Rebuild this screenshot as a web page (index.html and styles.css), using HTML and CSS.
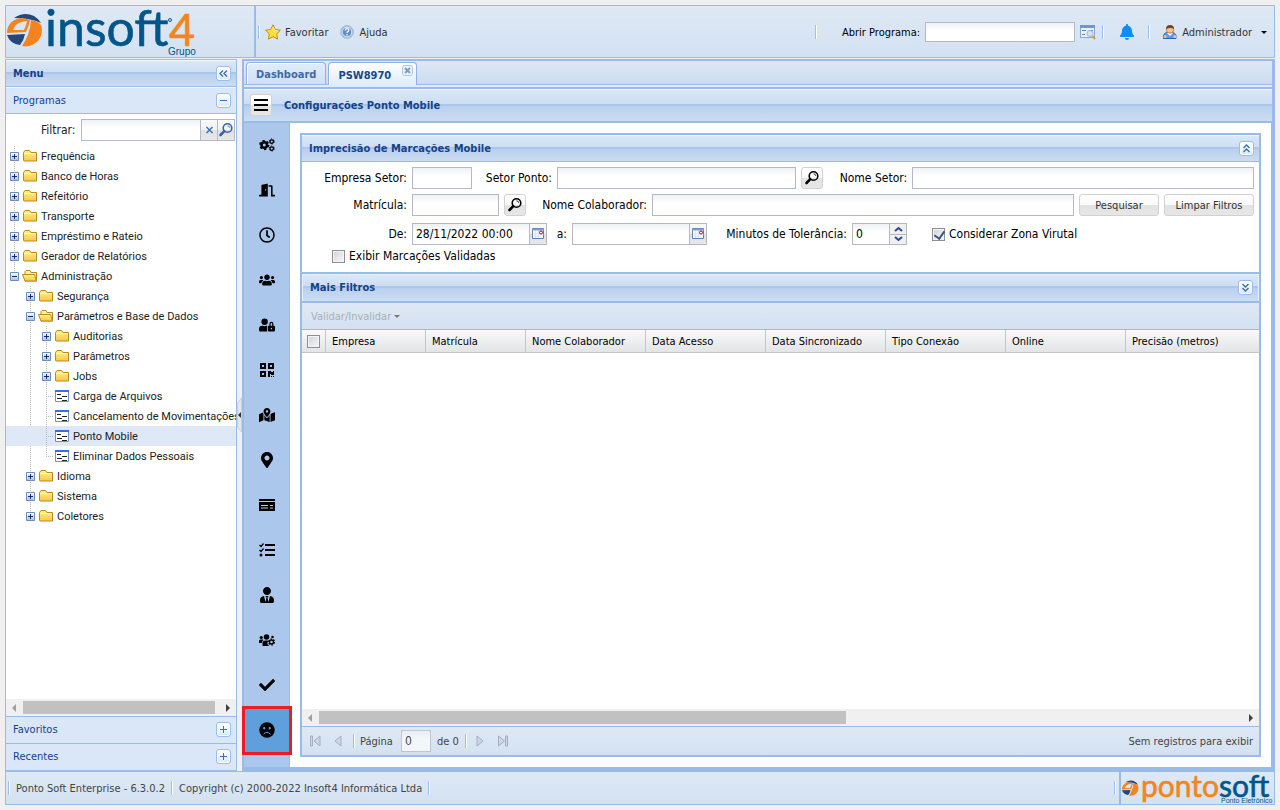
FILE: index.html
```
<!DOCTYPE html>
<html lang="pt-BR">
<head>
    <meta charset="UTF-8">
    <meta name="viewport" content="width=device-width, initial-scale=1.0">
    <title>Ponto Soft Enterprise</title>
    <link rel="stylesheet" href="styles.css">
</head>
<body>

<!-- icones -->
<svg class="sprite" aria-hidden="true">
    <symbol id="mais" viewBox="0 0 9 9"><path d="M.5.500h8v8h-8z" fill="url(#azulado)" stroke="#6f8db3"/><path d="M2 4.500h5M4.500 2v5" stroke="#0f2f66"/></symbol>
    <symbol id="menos" viewBox="0 0 9 9"><path d="M.5.500h8v8h-8z" fill="url(#azulado)" stroke="#6f8db3"/><path d="M2 4.500h5" stroke="#0f2f66"/></symbol>
    <symbol id="pasta" viewBox="0 0 16 16"><path d="M1.500 12.500V4.500L3 2.500h4.500l1.500 2h5.500v8.500H2z" fill="url(#ouro)" stroke="#b98a20"/><path d="M2.500 5.500h11" stroke="#fffbd0"/></symbol>
    <symbol id="aberta" viewBox="0 0 16 16"><path d="M3 12V3.500L4 2.500h4l1 2h5.500v8.500H3z" fill="#fff3a6" stroke="#b98a20"/><path d="M.5 6.500h12l2 6.500H3z" fill="url(#ouro)" stroke="#b98a20"/></symbol>
    <symbol id="folha" viewBox="0 0 16 16"><path d="M1.500 2.500h13v11h-13z" fill="#fff" stroke="#6f8fd0"/><path d="M1 3h14" stroke="#3d6be0" stroke-width="2"/><path d="M3 6.500h4M8 8.500h5M3 10.500h5M8 12.500h5" stroke="#222"/></symbol>
    <symbol id="lupa" viewBox="0 0 16 16"><circle cx="9.500" cy="6" r="4.300" fill="none" stroke="currentColor" stroke-width="1.600"/><path d="M6.300 9.200L2.500 13" stroke="currentColor" stroke-width="2.600" stroke-linecap="round"/><path d="M9.500 3.800q2 0 2.200 2" fill="none" stroke="currentColor" stroke-width=".8"/></symbol>
    <symbol id="calendario" viewBox="0 0 14 14"><path d="M1.500 1.500h11v10h-11z" fill="#fff" stroke="#5f82b5"/><path d="M1 2.500h12" stroke="#7c9bc8" stroke-width="2"/><path d="M3 6.500h7M3 9h7M4.500 4v7M7.500 4v7" stroke="#dde4ee"/><circle cx="10" cy="5.500" r="1.500" fill="#fff" stroke="#a00020"/></symbol>
    <symbol id="dupla" viewBox="0 0 9 9"><path d="M1.500 4l3-3 3 3M1.500 8l3-3 3 3" fill="none" stroke="#3a70ab" stroke-width="1.400"/></symbol>
    <symbol id="marca" viewBox="0 0 36 34">
        <path d="M7 5Q17-2 27 3Q32 6 34 10Q23 5 7 5z" fill="#25477b"/>
        <path fill-rule="evenodd" d="M13 5C4 7 0 13 0 20L19 19Q22 13 23 7Q18 5 13 5zM6 17Q8 9 20 8Q19 13 17 17z" fill="#f5841f"/>
        <path d="M24 7Q31 8 34 12Q37 20 31 28Q24 35 15 33Q23 22 24 7z" fill="#f5841f"/>
        <path d="M0 22L18 21Q17 27 13 32Q3 31 0 22z" fill="#25477b"/>
    </symbol>
    <defs>
        <linearGradient id="ouro" x2="0" y2="1"><stop stop-color="#fff48f"/><stop offset="1" stop-color="#fbc64a"/></linearGradient>
        <linearGradient id="azulado" x2="0" y2="1"><stop stop-color="#fff"/><stop offset="1" stop-color="#a9c0de"/></linearGradient>
    </defs>
</svg>

<header class="topo">
    <div class="logo">
        <svg viewBox="0 0 200 51" width="200" height="51" role="img" aria-label="Insoft4 Grupo">
            <use href="#marca" x="1" y="7" width="36" height="34"/>
            <text class="logo-azul" x="39" y="40" font-size="50">insoft</text>
            <text class="logo-laranja" x="163" y="40" font-size="45">4</text>
            <circle cx="164" cy="14" r="1.500" fill="none" stroke="#00568a"/>
            <text class="logo-sub" x="162" y="49" font-size="10">Grupo</text>
        </svg>
    </div>
    <div class="barra-topo">
        <span class="sep"></span>
        <button class="link-btn" type="button">
            <svg width="16" height="16" viewBox="0 0 16 16"><path d="M8 .8l2.300 4.700 5.100.8-3.700 3.600.9 5.200L8 12.600l-4.600 2.500.9-5.200L.6 6.300l5.100-.8z" fill="#ffdf3a" stroke="#c98a12"/><path d="M8 3l1.500 3.300 3 .6" fill="none" stroke="#fff8b0"/></svg>
            Favoritar
        </button>
        <button class="link-btn ajuda" type="button">
            <svg width="16" height="16" viewBox="0 0 16 16"><circle cx="8" cy="8" r="6.500" fill="#9dbbe2" stroke="#a9bfdc"/><circle cx="8" cy="8" r="4.800" fill="#5f8ccb" stroke="#dce9f8"/><path d="M6.300 6.500q0-1.800 1.800-1.800t1.700 1.500q0 .8-1.700 2v.8M8 10v1.500" fill="none" stroke="#fff" stroke-width="1.300"/></svg>
            Ajuda
        </button>
        <span class="sep longe"></span>
        <label class="abrir-label" for="abrir">Abrir Programa:</label>
        <input class="campo abrir" id="abrir" type="text">
        <button class="icone-btn" type="button" aria-label="Buscar programa">
            <svg width="16" height="16" viewBox="0 0 16 16"><path d="M.5 1.500h14v12H.5z" fill="#eaf1fa" stroke="#87a8d6"/><path d="M0 2.500h15" stroke="#6b98d8" stroke-width="3"/><path d="M2 6.500h4M2 10.500h3M9 6.500h4" stroke="#5d84bd"/><circle cx="10" cy="9.500" r="3" fill="#cfe2f8" stroke="#9db7d8"/><path d="M12.500 12l2.500 3" stroke="#d09a55" stroke-width="2"/></svg>
        </button>
        <span class="sep sep-sino"></span>
        <button class="icone-btn sino" type="button" aria-label="Notificações">
            <svg width="14" height="16" viewBox="0 0 448 512" fill="#0b8efb"><path d="M224 512c35.320 0 63.970-28.650 63.970-64H160.030c0 35.350 28.650 64 63.970 64zm215.390-149.710c-19.320-20.760-55.470-51.990-55.470-154.290 0-77.700-54.480-139.900-127.940-155.160V32c0-17.670-14.320-32-31.980-32s-31.980 14.330-31.980 32v20.840C118.560 68.100 64.080 130.300 64.080 208c0 102.300-36.150 133.530-55.470 154.290-6 6.450-8.660 14.160-8.610 21.710.11 16.400 12.980 32 32.100 32h383.800c19.120 0 32-15.600 32.100-32 .05-7.550-2.610-15.270-8.610-21.710z"/></svg>
        </button>
        <span class="sep"></span>
        <button class="link-btn usuario" type="button">
            <svg width="16" height="16" viewBox="0 0 16 16"><path d="M1.500 14.500q-1-5.500 4-6h4.500q5 .5 4 6z" fill="#5b9cf0" stroke="#2d62b5"/><path d="M5 9l3 3 3-3z" fill="#fff"/><circle cx="8" cy="5.500" r="3.700" fill="#f6c48e" stroke="#b07030" stroke-width=".8"/><path d="M4 5Q4 1 8 1t4 4Q9 2.800 4 5z" fill="#7a431b"/><circle cx="3" cy="12.500" r="1.500" fill="#f6c48e"/><circle cx="13" cy="12.500" r="1.500" fill="#f6c48e"/></svg>
            Administrador
            <span class="seta"></span>
        </button>
    </div>
</header>

<div class="corpo">
    <aside class="lateral">
        <div class="cabecalho menu-cab">
            <h2>Menu</h2>
            <button class="ferramenta" type="button" aria-label="Recolher menu"><svg class="gira-esq" width="9" height="9"><use href="#dupla"/></svg></button>
        </div>
        <div class="sanfona">
            <h3>Programas</h3>
            <button class="ferramenta" type="button" aria-label="Recolher programas"><svg width="9" height="9"><path d="M1 4.500h7" stroke="#3a70ab"/></svg></button>
        </div>
        <div class="filtro">
            <label for="filtrar">Filtrar:</label>
            <input class="campo" id="filtrar" type="text">
            <button class="gatilho" type="button" aria-label="Limpar"><svg width="9" height="9"><path d="M1.500 1l6 6M7.500 1l-6 6" stroke="#3b76b8" stroke-width="1.500"/></svg></button>
            <button class="gatilho" type="button" aria-label="Filtrar"><svg width="16" height="16"><use href="#lupa"/></svg></button>
        </div>
        <nav class="arvore">
            <ul>
                <li><div class="no"><svg class="exp"><use href="#mais"/></svg><svg class="ic"><use href="#pasta"/></svg>Frequência</div></li>
                <li><div class="no"><svg class="exp"><use href="#mais"/></svg><svg class="ic"><use href="#pasta"/></svg>Banco de Horas</div></li>
                <li><div class="no"><svg class="exp"><use href="#mais"/></svg><svg class="ic"><use href="#pasta"/></svg>Refeitório</div></li>
                <li><div class="no"><svg class="exp"><use href="#mais"/></svg><svg class="ic"><use href="#pasta"/></svg>Transporte</div></li>
                <li><div class="no"><svg class="exp"><use href="#mais"/></svg><svg class="ic"><use href="#pasta"/></svg>Empréstimo e Rateio</div></li>
                <li><div class="no"><svg class="exp"><use href="#mais"/></svg><svg class="ic"><use href="#pasta"/></svg>Gerador de Relatórios</div></li>
                <li><div class="no"><svg class="exp"><use href="#menos"/></svg><svg class="ic"><use href="#aberta"/></svg>Administração</div>
                    <ul class="nivel-1">
                        <li><div class="no"><svg class="exp"><use href="#mais"/></svg><svg class="ic"><use href="#pasta"/></svg>Segurança</div></li>
                        <li><div class="no"><svg class="exp"><use href="#menos"/></svg><svg class="ic"><use href="#aberta"/></svg>Parâmetros e Base de Dados</div>
                            <ul class="nivel-2">
                                <li><div class="no"><svg class="exp"><use href="#mais"/></svg><svg class="ic"><use href="#pasta"/></svg>Auditorias</div></li>
                                <li><div class="no"><svg class="exp"><use href="#mais"/></svg><svg class="ic"><use href="#pasta"/></svg>Parâmetros</div></li>
                                <li><div class="no"><svg class="exp"><use href="#mais"/></svg><svg class="ic"><use href="#pasta"/></svg>Jobs</div></li>
                                <li><div class="no"><span class="galho"></span><svg class="ic"><use href="#folha"/></svg>Carga de Arquivos</div></li>
                                <li><div class="no"><span class="galho"></span><svg class="ic"><use href="#folha"/></svg>Cancelamento de Movimentações</div></li>
                                <li><div class="no selecionado"><span class="galho"></span><svg class="ic"><use href="#folha"/></svg>Ponto Mobile</div></li>
                                <li><div class="no"><span class="galho"></span><svg class="ic"><use href="#folha"/></svg>Eliminar Dados Pessoais</div></li>
                            </ul>
                        </li>
                        <li><div class="no"><svg class="exp"><use href="#mais"/></svg><svg class="ic"><use href="#pasta"/></svg>Idioma</div></li>
                        <li><div class="no"><svg class="exp"><use href="#mais"/></svg><svg class="ic"><use href="#pasta"/></svg>Sistema</div></li>
                        <li><div class="no"><svg class="exp"><use href="#mais"/></svg><svg class="ic"><use href="#pasta"/></svg>Coletores</div></li>
                    </ul>
                </li>
            </ul>
        </nav>
        <div class="rolagem">
            <span class="rol-esq"></span><span class="trilho"><span class="polegar arvore-polegar"></span></span><span class="rol-dir"></span>
        </div>
        <div class="sanfona fechada">
            <h3>Favoritos</h3>
            <button class="ferramenta" type="button" aria-label="Expandir favoritos"><svg width="9" height="9"><path d="M1 4.500h7M4.500 1v7" stroke="#3a70ab"/></svg></button>
        </div>
        <div class="sanfona fechada">
            <h3>Recentes</h3>
            <button class="ferramenta" type="button" aria-label="Expandir recentes"><svg width="9" height="9"><path d="M1 4.500h7M4.500 1v7" stroke="#3a70ab"/></svg></button>
        </div>
    </aside>

    <div class="divisor"><button type="button" aria-label="Recolher"><svg width="5" height="34"><path d="M4.500 0v34L.5 29V5z" fill="#e6e6e6" stroke="#cfcfcf"/><path d="M4 14v6l-3-3z" fill="#333"/></svg></button></div>

    <main class="painel">
        <div class="abas">
            <a class="aba" href="#">Dashboard</a>
            <a class="aba ativa" href="#">PSW8970<svg class="fechar" width="11" height="11"><rect x=".5" y=".5" width="10" height="10" rx="2" fill="#eaf3fe" stroke="#a9c6ea"/><path d="M3 3l5 5M8 3L3 8" stroke="#7d9cc5" stroke-width="2"/></svg></a>
        </div>
        <div class="fio"></div>
        <div class="cabecalho titulo-cab">
            <button class="botao hamburguer" type="button" aria-label="Abrir menu"><svg width="14" height="14"><path d="M0 2h14M0 7h14M0 12h14" stroke="#000" stroke-width="2"/></svg></button>
            <h1>Configurações Ponto Mobile</h1>
        </div>
        <div class="conteudo">
            <nav class="icones">
                <a href="#" aria-label="Parâmetros"><svg viewBox="0 0 32 26"><circle cx="10.500" cy="13" r="5.500" fill="none" stroke="#000" stroke-width="5"/><circle cx="10.500" cy="13" r="8.500" fill="none" stroke="#000" stroke-width="3.500" stroke-dasharray="4.450"/><circle cx="25.500" cy="6" r="3.500" fill="none" stroke="#000" stroke-width="2.500"/><circle cx="25.500" cy="6" r="5" fill="none" stroke="#000" stroke-width="2" stroke-dasharray="2.618"/><circle cx="25.500" cy="20" r="3.500" fill="none" stroke="#000" stroke-width="2.500"/><circle cx="25.500" cy="20" r="5" fill="none" stroke="#000" stroke-width="2" stroke-dasharray="2.618"/></svg></a>
                <a href="#" aria-label="Acessos"><svg viewBox="0 0 640 512"><path fill-rule="evenodd" d="M624 448h-80V113.500C544 86.200 522.500 64 496 64H384v64h96v384h144c8.800 0 16-7.200 16-16v-32c0-8.800-7.200-16-16-16zM312.200 1l-192 49.700C106 54.400 96 67.600 96 82.600V448H16c-8.800 0-16 7.200-16 16v32c0 8.800 7.200 16 16 16h336V33.200C352 11.600 332.400-4.200 312.200 1zM264 288c-13.300 0-24-14.300-24-32s10.700-32 24-32 24 14.300 24 32-10.700 32-24 32z"/></svg></a>
                <a href="#" aria-label="Horários"><svg viewBox="0 0 512 512"><path d="M256 8C119 8 8 119 8 256s111 248 248 248 248-111 248-248S393 8 256 8zm0 448c-110.500 0-200-89.500-200-200S145.500 56 256 56s200 89.500 200 200-89.500 200-200 200zm61.800-104.400l-84.900-61.700c-3.100-2.300-4.900-5.900-4.900-9.700V116c0-6.600 5.400-12 12-12h32c6.600 0 12 5.400 12 12v141.700l66.800 48.600c5.400 3.900 6.500 11.400 2.600 16.800L334.600 349c-3.900 5.300-11.400 6.500-16.800 2.600z"/></svg></a>
                <a href="#" aria-label="Grupos"><svg viewBox="0 0 640 512"><path d="M96 224c35.300 0 64-28.700 64-64s-28.700-64-64-64-64 28.700-64 64 28.700 64 64 64zm448 0c35.300 0 64-28.700 64-64s-28.700-64-64-64-64 28.700-64 64 28.700 64 64 64zm32 32h-64c-17.600 0-33.500 7.100-45.100 18.600 40.300 22.100 68.900 62 75.100 109.400h66c17.700 0 32-14.300 32-32v-32c0-35.300-28.700-64-64-64zm-256 0c61.900 0 112-50.100 112-112S381.900 32 320 32 208 82.100 208 144s50.100 112 112 112zm76.800 32h-8.300c-20.800 10-43.900 16-68.500 16s-47.600-6-68.500-16h-8.300C179.600 288 128 339.600 128 403.200V432c0 26.500 21.500 48 48 48h288c26.500 0 48-21.500 48-48v-28.800c0-63.600-51.600-115.200-115.200-115.200zm-223.700-13.400C161.500 263.100 145.600 256 128 256H64c-35.300 0-64 28.700-64 64v32c0 17.700 14.300 32 32 32h65.900c6.300-47.400 34.900-87.300 75.200-109.400z"/></svg></a>
                <a href="#" aria-label="Permissões"><svg viewBox="0 0 640 512"><path d="M224 256A128 128 0 1 0 96 128a128 128 0 0 0 128 128zm96 64a63.080 63.080 0 0 1 8.100-30.500c-4.800-.5-9.500-1.500-14.500-1.500h-16.700a174.080 174.080 0 0 1-145.800 0h-16.700A134.430 134.430 0 0 0 0 422.400V464a48 48 0 0 0 48 48h280.900a63.540 63.540 0 0 1-8.900-32zm288-32h-32v-80a80 80 0 0 0-160 0v80h-32a32 32 0 0 0-32 32v160a32 32 0 0 0 32 32h224a32 32 0 0 0 32-32V320a32 32 0 0 0-32-32zM496 432a32 32 0 1 1 32-32 32 32 0 0 1-32 32zm32-144h-64v-80a32 32 0 0 1 64 0z"/></svg></a>
                <a href="#" aria-label="QR Code"><svg viewBox="0 0 448 512"><path d="M0 224h192V32H0v192zM64 96h64v64H64V96zm192-64v192h192V32H256zm128 128h-64V96h64v64zM0 480h192V288H0v192zm64-128h64v64H64v-64zm352-64h32v128h-96v-32h-32v96h-64V288h96v32h64v-32zm0 160h32v32h-32v-32zm-64 0h32v32h-32v-32z"/></svg></a>
                <a href="#" aria-label="Mapa"><svg viewBox="0 0 576 512"><path d="M288 0c-69.590 0-126 56.410-126 126 0 56.260 82.350 158.800 113.900 196.020 6.390 7.540 17.820 7.540 24.200 0C331.650 284.800 414 182.260 414 126 414 56.410 357.590 0 288 0zm0 168c-23.200 0-42-18.800-42-42s18.800-42 42-42 42 18.800 42 42-18.800 42-42 42zM20.120 215.950A32.006 32.006 0 0 0 0 245.660v250.320c0 11.320 11.430 19.060 21.940 14.860L160 448V214.920c-8.840-15.980-16.070-31.540-21.250-46.420L20.120 215.950zM288 359.670c-14.070 0-27.380-6.180-36.510-16.960-19.660-23.200-40.570-49.620-59.490-76.720v182l192 64V266c-18.920 27.090-39.820 53.520-59.490 76.720-9.130 10.770-22.440 16.950-36.510 16.950zm266.060-198.510L416 224v288l139.880-55.950A31.996 31.996 0 0 0 576 426.340V176.020c0-11.320-11.430-19.060-21.940-14.860z"/></svg></a>
                <a href="#" aria-label="Locais"><svg viewBox="0 0 384 512"><path d="M172.268 501.670C26.970 291.031 0 269.413 0 192 0 85.961 85.961 0 192 0s192 85.961 192 192c0 77.413-26.970 99.031-172.268 309.670-9.535 13.774-29.930 13.773-39.464 0zM192 272c44.183 0 80-35.817 80-80s-35.817-80-80-80-80 35.817-80 80 35.817 80 80 80z"/></svg></a>
                <a href="#" aria-label="Cartões"><svg viewBox="0 0 32 24"><path fill-rule="evenodd" d="M1 0h30q1 0 1 1v3H0V1q0-1 1-1zM0 6h32v17q0 1-1 1H1q-1 0-1-1zM4 12v2h14v-2zM4 17v2h14v-2zM22 12v2h6v-2zM22 17v2h6v-2z"/></svg></a>
                <a href="#" aria-label="Tarefas"><svg viewBox="0 0 32 28"><path d="M12 2h20v4H12zM12 12h20v4H12zM12 22h20v4H12z"/><path d="M1 4l3 3 5-6M1 14l3 3 5-6" fill="none" stroke="#000" stroke-width="2.500"/><circle cx="4" cy="24" r="3"/></svg></a>
                <a href="#" aria-label="Gestores"><svg viewBox="0 0 448 512"><path d="M224 256c70.700 0 128-57.300 128-128S294.700 0 224 0 96 57.300 96 128s57.300 128 128 128zm95.800 32.600L272 480l-32-136 32-56h-96l32 56-32 136-47.800-191.400C56.900 292 0 350.300 0 422.400V464c0 26.500 21.500 48 48 48h352c26.500 0 48-21.500 48-48v-41.600c0-72.100-56.900-130.400-128.200-133.800z"/></svg></a>
                <a href="#" aria-label="Configurar equipes"><svg viewBox="0 0 32 26"><circle cx="4.500" cy="8" r="3.200"/><circle cx="15" cy="7" r="5.500"/><path d="M0 18v-3q0-3 3-3h4q2 0 2 1-3 2-3.500 6H1q-1 0-1-1zM7 24v-5q0-5 6-5h4q2 0 1 2-2 2-1 5l3 4H8q-1 0-1-1z"/><circle cx="25" cy="17" r="4" fill="none" stroke="#000" stroke-width="2.800"/><circle cx="25" cy="17" r="6" fill="none" stroke="#000" stroke-width="2.500" stroke-dasharray="3.140"/><circle cx="27" cy="7" r="2.500"/></svg></a>
                <a href="#" aria-label="Validar"><svg viewBox="0 0 512 512"><path d="M173.898 439.404l-166.400-166.400c-9.997-9.997-9.997-26.206 0-36.204l36.203-36.204c9.997-9.998 26.207-9.998 36.204 0L192 312.690 432.095 72.596c9.997-9.997 26.207-9.997 36.204 0l36.203 36.204c9.997 9.997 9.997 26.206 0 36.204l-294.400 294.401c-9.998 9.997-26.207 9.997-36.204-.001z"/></svg></a>
                <a class="atual" href="#" aria-label="Imprecisão de marcações"><svg viewBox="0 0 32 32"><circle cx="16" cy="16" r="15.500"/><circle cx="10.500" cy="12.500" r="2.300" fill="#5fa0dc"/><circle cx="21.500" cy="12.500" r="2.300" fill="#5fa0dc"/><path d="M9.500 24q6.500-7 13 0" fill="none" stroke="#5fa0dc" stroke-width="2" stroke-linecap="round"/></svg></a>
            </nav>

            <section class="quadro">
                <div class="cabecalho">
                    <h2>Imprecisão de Marcações Mobile</h2>
                    <button class="ferramenta" type="button" aria-label="Recolher"><svg width="9" height="9"><use href="#dupla"/></svg></button>
                </div>
                <form class="formulario">
                    <div class="linha">
                        <label class="rot-1" for="empresa">Empresa Setor:</label>
                        <input class="campo c-empresa" id="empresa" type="text">
                        <label class="rot-setor" for="setor">Setor Ponto:</label>
                        <input class="campo c-setor" id="setor" type="text">
                        <button class="botao quadrado" type="button" aria-label="Buscar setor"><svg width="16" height="16"><use href="#lupa"/></svg></button>
                        <label class="rot-nome" for="nomeSetor">Nome Setor:</label>
                        <input class="campo c-nome-setor" id="nomeSetor" type="text">
                    </div>
                    <div class="linha">
                        <label class="rot-1" for="matricula">Matrícula:</label>
                        <input class="campo c-matricula" id="matricula" type="text">
                        <button class="botao quadrado" type="button" aria-label="Buscar colaborador"><svg width="16" height="16"><use href="#lupa"/></svg></button>
                        <label class="rot-colab" for="colaborador">Nome Colaborador:</label>
                        <input class="campo c-flex" id="colaborador" type="text">
                        <button class="botao b-pesquisar" type="button">Pesquisar</button>
                        <button class="botao b-limpar" type="button">Limpar Filtros</button>
                    </div>
                    <div class="linha linha-data">
                        <label class="rot-1" for="de">De:</label>
                        <span class="data"><input class="campo" id="de" type="text" value="28/11/2022 00:00"><button class="gatilho" type="button" aria-label="Calendário"><svg width="14" height="14"><use href="#calendario"/></svg></button></span>
                        <label class="rot-a" for="ate">a:</label>
                        <span class="data"><input class="campo" id="ate" type="text"><button class="gatilho" type="button" aria-label="Calendário"><svg width="14" height="14"><use href="#calendario"/></svg></button></span>
                        <label class="rot-min" for="minutos">Minutos de Tolerância:</label>
                        <span class="giro"><input class="campo" id="minutos" type="text" value="0"><span class="giro-botoes"><button type="button" aria-label="Aumentar"><svg width="9" height="6"><path d="M1 5l3.500-3L8 5" fill="none" stroke="#2c4a8e" stroke-width="2"/></svg></button><button type="button" aria-label="Diminuir"><svg width="9" height="6"><path d="M1 1l3.500 3L8 1" fill="none" stroke="#2c4a8e" stroke-width="2"/></svg></button></span></span>
                        <label class="opcao zona"><input type="checkbox" checked>Considerar Zona Virutal</label>
                    </div>
                    <div class="linha linha-exibir">
                        <label class="opcao"><input type="checkbox">Exibir Marcações Validadas</label>
                    </div>
                </form>
                <div class="cabecalho mais-filtros">
                    <h2>Mais Filtros</h2>
                    <button class="ferramenta" type="button" aria-label="Expandir"><svg class="gira-baixo" width="9" height="9"><use href="#dupla"/></svg></button>
                </div>
                <div class="barra-grade">
                    <button type="button" disabled>Validar/Invalidar<span class="seta"></span></button>
                </div>
                <div class="grade">
                    <table>
                        <thead>
                            <tr>
                                <th class="col-check"><input type="checkbox" aria-label="Selecionar todos"></th>
                                <th class="col-m">Empresa</th>
                                <th class="col-m">Matrícula</th>
                                <th class="col-g">Nome Colaborador</th>
                                <th class="col-g">Data Acesso</th>
                                <th class="col-g">Data Sincronizado</th>
                                <th class="col-g">Tipo Conexão</th>
                                <th class="col-g">Online</th>
                                <th>Precisão (metros)</th>
                            </tr>
                        </thead>
                        <tbody></tbody>
                    </table>
                </div>
                <div class="rolagem">
                    <span class="rol-esq"></span><span class="trilho"><span class="polegar grade-polegar"></span></span><span class="rol-dir"></span>
                </div>
                <div class="paginacao">
                    <button type="button" disabled aria-label="Primeira"><svg width="12" height="12"><path d="M1.500 1h2v10h-2zM11 1v10L5 6z" fill="#cdd6e2" stroke="#a3afbf"/></svg></button>
                    <button type="button" disabled aria-label="Anterior"><svg width="12" height="12"><path d="M10 1v10L4 6z" fill="#cdd6e2" stroke="#a3afbf"/></svg></button>
                    <span class="sep"></span>
                    <label class="pag-label" for="pagina">Página</label>
                    <input class="campo" id="pagina" type="text" value="0" disabled>
                    <span class="pag-total">de 0</span>
                    <span class="sep"></span>
                    <button type="button" disabled aria-label="Próxima"><svg width="12" height="12"><path d="M2 1v10l6-5z" fill="#cdd6e2" stroke="#a3afbf"/></svg></button>
                    <button type="button" disabled aria-label="Última"><svg width="12" height="12"><path d="M1.500 1v10l6-5zM8.500 1h2v10h-2z" fill="#cdd6e2" stroke="#a3afbf"/></svg></button>
                    <span class="pag-msg">Sem registros para exibir</span>
                </div>
            </section>
        </div>
    </main>
</div>

<footer class="rodape">
    <span class="sep"></span>
    <span class="versao">Ponto Soft Enterprise - 6.3.0.2</span>
    <span class="sep"></span>
    <span class="direitos">Copyright (c) 2000-2022 Insoft4 Informática Ltda</span>
    <span class="sep"></span>
    <span class="sep final"></span>
    <div class="logo-ponto">
        <svg viewBox="0 0 153 32" width="153" height="32" role="img" aria-label="Pontosoft Ponto Eletrônico">
            <use href="#marca" x="1" y="8" width="17" height="16"/>
            <text class="logo-laranja" x="20" y="25" font-size="30">ponto<tspan class="logo-azul">soft</tspan></text>
            <text class="logo-sub" x="100" y="31" font-size="7">Ponto Eletrônico</text>
        </svg>
    </div>
</footer>

</body>
</html>
```
FILE: styles.css
```
* {
    box-sizing: border-box;
}
body {
    margin: 0;
    padding: 5px;
    height: 100vh;
    display: flex;
    flex-direction: column;
    background: #f0f0f0;
    font-family: "DejaVu Sans Condensed", "Noto Sans", sans-serif;
    font-size: 11px;
    color: #222;
    overflow: hidden;
}
button, input {
    font: inherit;
    color: inherit;
    margin: 0;
}
button {
    display: flex;
    align-items: center;
    justify-content: center;
    padding: 0;
    border: 0;
    background: none;
    white-space: nowrap;
}
h1, h2, h3 {
    margin: 0;
    font-size: 11px;
    color: #15428b;
}
a {
    color: inherit;
    text-decoration: none;
}
ul {
    list-style: none;
    margin: 0;
    padding: 0;
}
svg {
    flex: none;
    display: block;
}
.sprite {
    position: absolute;
    width: 0;
    height: 0;
}
.sep {
    flex: none;
    width: 2px;
    height: 14px;
    background: #fff;
    border-left: 1px solid #98c0f4;
}
.campo {
    height: 22px;
    min-width: 0;
    padding: 0 3px;
    border: 1px solid #b5b8c8;
    background: linear-gradient(#eef1f2, #fff 8px);
    font-size: 12px;
    color: #000;
}
.seta {
    border: 3px solid transparent;
    border-top-color: #000;
    border-bottom: 0;
}

/* topo */
.topo {
    flex: none;
    display: flex;
    height: 53px;
    margin-bottom: 1px;
    border: 1px solid #99bbe8;
    background: linear-gradient(#dfe9f5, #d3e1f1);
}
.logo {
    width: 250px;
    border-right: 2px solid #99bbe8;
}
.logo svg, .logo-ponto svg {
    overflow: visible;
}
.logo-azul {
    font-family: Lato, sans-serif;
    fill: #00568a;
    stroke: #00568a;
    stroke-width: .6;
}
.logo-laranja {
    font-family: Lato, sans-serif;
    fill: #f5841f;
    stroke: #f5841f;
    stroke-width: .6;
}
.logo-sub {
    font-family: "Liberation Sans", sans-serif;
    fill: #00568a;
}
.barra-topo {
    flex: 1;
    display: flex;
    align-items: center;
    padding: 1px 7px 0 2px;
}
.link-btn {
    gap: 4px;
    margin-left: 5px;
    color: #333;
}
.ajuda {
    margin-left: 11px;
}
.longe {
    margin-left: auto;
}
.abrir-label {
    margin: 0 5px 0 25px;
    color: #000;
}
.abrir {
    width: 150px;
    height: 20px;
}
.icone-btn {
    margin-left: 5px;
}
.sep-sino {
    margin-left: 6px;
}
.sino {
    margin: 0 14px 0 16px;
}
.usuario {
    margin-left: 12px;
}
.usuario .seta {
    margin-left: 5px;
}

/* estrutura */
.corpo {
    flex: 1;
    min-height: 0;
    display: flex;
}
.lateral {
    flex: none;
    width: 232px;
    display: flex;
    flex-direction: column;
    background: #fff;
    border: 1px solid #99bbe8;
}
.cabecalho {
    flex: none;
    display: flex;
    align-items: center;
    height: 27px;
    padding: 0 5px 0 7px;
    border-top: 1px solid #f3f8fd;
    border-bottom: 1px solid #99bbe8;
    background: linear-gradient(#dae7f6, #cddef3 45%, #abc7ec 46%, #abc7ec 50%, #b8cfee 51%, #cbddf3);
}
.cabecalho h2 {
    flex: 1;
}
.menu-cab {
    padding-bottom: 1px;
}
.ferramenta {
    flex: none;
    width: 15px;
    height: 15px;
    border: 1px solid #9cbde8;
    border-radius: 3px;
    background: linear-gradient(#fff, #d8e9fc);
    box-shadow: inset 0 0 0 1px #fff;
}
.gira-esq {
    transform: rotate(-90deg);
}
.gira-baixo {
    transform: rotate(180deg);
}
.sanfona {
    flex: none;
    display: flex;
    align-items: center;
    height: 27px;
    padding: 0 5px 1px 7px;
    background: #d9e7f8;
    border-top: 1px solid #f3f7fb;
    border-bottom: 1px solid #99bbe8;
}
.fechada {
    padding-bottom: 2px;
    border-top-color: #99bbe8;
    border-bottom: 0;
}
.sanfona h3 {
    flex: 1;
    font-weight: normal;
}
.filtro {
    flex: none;
    display: flex;
    padding: 5px 1px 3px 35px;
}
.filtro label {
    margin-right: 6px;
    line-height: 22px;
    font-size: 12px;
}
.filtro .campo {
    flex: 1;
}
.gatilho {
    flex: none;
    width: 17px;
    height: 22px;
    border: 1px solid #b5b8c8;
    border-left: 0;
    background: linear-gradient(#fafafa, #f0f0f0 50%, #e0e0e0 51%, #e8e8e8);
    color: #3566ab;
}

/* arvore */
.arvore {
    flex: 1;
    min-height: 0;
    padding-top: 2px;
    overflow: hidden;
    font-family: Roboto, sans-serif;
}
.arvore ul {
    position: relative;
}
.arvore ul::before {
    content: "";
    position: absolute;
    top: 0;
    bottom: 10px;
    left: 8px;
    width: 1px;
    background: repeating-linear-gradient(#b9b9b9 0 1px, transparent 1px 2px);
}
.arvore > ul::before {
    height: 130px;
}
.arvore .nivel-1::before {
    left: 24px;
}
.arvore .nivel-2::before {
    left: 40px;
}
.no {
    display: flex;
    align-items: center;
    height: 20px;
    white-space: nowrap;
}
.nivel-1 .no {
    padding-left: 16px;
}
.nivel-2 .no {
    padding-left: 32px;
}
.selecionado {
    background: #dfe8f6;
}
.exp {
    position: relative;
    width: 9px;
    height: 9px;
    margin: 0 3px 0 4px;
}
.ic {
    width: 16px;
    height: 16px;
    margin-right: 3px;
}
.galho {
    flex: none;
    width: 8px;
    height: 1px;
    margin-left: 8px;
    background: repeating-linear-gradient(90deg, #b9b9b9 0 1px, transparent 1px 2px);
}
.rolagem {
    flex: none;
    display: flex;
    align-items: center;
    height: 17px;
    background: #f0f0f0;
}
.rol-esq, .rol-dir {
    border: 4px solid transparent;
    margin: 0 6px 0 5px;
}
.rol-esq {
    border-right-color: #a0a0a0;
    border-left: 0;
    margin: 0 7px 0 6px;
}
.rol-dir {
    border-left-color: #404040;
    border-right: 0;
}
.trilho {
    flex: 1;
}
.polegar {
    display: block;
    height: 13px;
    background: #c1c1c1;
}
.arvore-polegar {
    width: 97%;
}
.grade-polegar {
    width: 57%;
}
.divisor {
    flex: none;
    width: 5px;
    display: flex;
    align-items: center;
}

/* painel central */
.painel {
    flex: 1;
    min-width: 0;
    display: flex;
    flex-direction: column;
    border: solid #99bbe8;
    border-width: 2px 3px 4px 2px;
}
.abas {
    flex: none;
    display: flex;
    gap: 2px;
    height: 24px;
    padding: 1px 2px 0;
    background: linear-gradient(#dde8f5, #cbdbef);
    border-bottom: 1px solid #99bbe8;
}
.aba {
    display: flex;
    align-items: center;
    padding: 2px 9px 0;
    border: 1px solid #8db2e3;
    border-bottom: 0;
    border-radius: 4px 4px 0 0;
    box-shadow: inset 1px 1px 0 #fff;
    background: linear-gradient(#dfecfb, #cfe0f5);
    font-weight: bold;
    color: #416aa3;
}
.ativa {
    padding-right: 3px;
    margin-bottom: -1px;
    background: linear-gradient(#fff, #deecfd);
    color: #15498b;
}
.fechar {
    align-self: flex-start;
    margin-left: 11px;
}
.fio {
    flex: none;
    height: 4px;
    background: #deecfd;
    border-bottom: 2px solid #99bbe8;
}
.titulo-cab {
    height: 34px;
    padding-bottom: 1px;
    border-bottom-width: 2px;
}
.titulo-cab h1 {
    margin-left: 12px;
}
.botao {
    flex: none;
    height: 22px;
    border: 1px solid #d1d1d1;
    border-radius: 3px;
    background: linear-gradient(#fff, #f9f9f9 48%, #e2e2e2 52%, #e7e7e7);
    color: #333;
}
.hamburguer, .quadrado {
    width: 22px;
}
.quadrado {
    color: #000;
}
.hamburguer {
    margin-left: -1px;
}
.conteudo {
    flex: 1;
    min-height: 0;
    display: flex;
    background: #fff;
    border-right: 1px solid #99bbe8;
}
.icones {
    flex: none;
    width: 46px;
    background: #abc7ec;
    border-right: 1px solid #99bbe8;
}
.icones a {
    display: flex;
    align-items: center;
    justify-content: center;
    height: 45px;
    padding-bottom: 2px;
}
.icones svg {
    width: 16px;
    height: 16px;
}
.icones .atual {
    position: relative;
    background: #5fa0dc;
    margin-right: -1px;
    outline: 3px solid #ed1c24;
    outline-offset: -1px;
}

/* quadro de marcacoes */
.quadro {
    flex: 1;
    min-width: 0;
    display: flex;
    flex-direction: column;
    margin: 10px;
    border: 2px solid #99bbe8;
}
.formulario {
    flex: none;
    padding: 5px 5px 9px;
    font-size: 12px;
    color: #000;
}
.linha {
    display: flex;
    align-items: center;
    gap: 5px;
    margin-bottom: 5px;
}
.linha label {
    flex: none;
    text-align: right;
    white-space: nowrap;
}
.linha-data {
    margin-top: 7px;
    margin-bottom: 4px;
}
.linha-exibir {
    margin-bottom: 0;
    padding-left: 25px;
}
.rot-1 { width: 100px; }
.rot-setor { width: 75px; }
.rot-nome { width: 79px; }
.rot-colab { width: 116px; }
.rot-a { width: 15px; }
.rot-min { width: 135px; }
.c-empresa { width: 60px; }
.c-matricula { width: 87px; }
.c-setor { flex: 9; }
.c-nome-setor { flex: 13; }
.c-flex { flex: 1; }
.botao.b-pesquisar, .botao.b-limpar {
    width: 80px;
    font-size: 11px;
}
.botao.b-limpar {
    width: 90px;
}
.data, .giro {
    display: flex;
    width: 135px;
}
.data .campo, .giro .campo {
    flex: 1;
}
.giro {
    width: 55px;
}
.giro-botoes {
    display: flex;
    flex-direction: column;
    width: 17px;
    border: 1px solid #b5b8c8;
    border-left: 0;
}
.giro-botoes button {
    flex: 1;
    background: #f0f0f0;
}
.giro-botoes button + button {
    border-top: 1px solid #b5b8c8;
}
.opcao {
    display: flex;
    align-items: center;
    gap: 4px;
}
.zona {
    margin-left: 20px;
}
input[type="checkbox"] {
    appearance: none;
    position: relative;
    flex: none;
    width: 13px;
    height: 13px;
    border: 1px solid #8e8f8f;
    background: linear-gradient(135deg, #d0d4d8, #f6f6f6);
    box-shadow: inset 0 0 0 1px #f4f4f4;
}
input[type="checkbox"]:checked::after {
    content: "";
    position: absolute;
    left: 3px;
    top: 0;
    width: 5px;
    height: 8px;
    border: solid #3d5587;
    border-width: 0 2px 2px 0;
    transform: rotate(35deg);
}
.mais-filtros {
    height: 31px;
    padding: 0 6px 0 8px;
    border-top: 2px solid #99bbe8;
    border-bottom-width: 2px;
    background-clip: padding-box;
    box-shadow: inset 1px 1px 0 #e8f1fb, inset -1px 0 0 #e8f1fb;
}
.barra-grade {
    flex: none;
    display: flex;
    align-items: center;
    height: 27px;
    padding-left: 9px;
    border-bottom: 1px solid #99bbe8;
    background: linear-gradient(#dfe9f5, #d3e1f1);
}
.barra-grade button {
    color: #a9b0b8;
}
.barra-grade .seta {
    margin-left: 3px;
    border-top-color: #777;
}
.grade {
    flex: 1;
    min-height: 0;
    overflow: hidden;
}
.grade table {
    width: 100%;
    table-layout: fixed;
    border-collapse: separate;
    border-spacing: 0;
}
.grade th {
    height: 23px;
    padding: 0 6px;
    border-right: 1px solid #c5c5c5;
    border-bottom: 1px solid #c5c5c5;
    background: linear-gradient(#f9f9f9, #e3e4e6);
    font-weight: normal;
    text-align: left;
    color: #000;
    white-space: nowrap;
}
.grade th:last-child {
    border-right: 0;
}
.grade th input {
    display: block;
}
.grade .col-check {
    width: 24px;
    padding: 0 5px;
}
.col-m { width: 100px; }
.col-g { width: 120px; }
.paginacao {
    flex: none;
    display: flex;
    align-items: center;
    height: 29px;
    padding: 0 6px 0 7px;
    border-top: 1px solid #99bbe8;
    background: linear-gradient(#dfe9f5, #d3e1f1);
    color: #444;
}
.paginacao button {
    width: 12px;
    margin-right: 10px;
}
.pag-label {
    margin: 0 8px 0 5px;
}
.paginacao .campo {
    width: 30px;
    opacity: .7;
}
.pag-total {
    margin: 0 6px;
}
.pag-total + .sep {
    margin-right: 8px;
}
.pag-msg {
    margin-left: auto;
}

/* rodape */
.rodape {
    flex: none;
    display: flex;
    align-items: center;
    height: 34px;
    padding-left: 2px;
    border: 1px solid #99bbe8;
    background: linear-gradient(#dfe9f5, #d3e1f1);
    color: #444;
}
.versao, .direitos {
    margin: 0 6px;
}
.final {
    margin-left: auto;
}
.logo-ponto {
    margin-left: 3px;
    border-left: 2px solid #99bbe8;
}
```
